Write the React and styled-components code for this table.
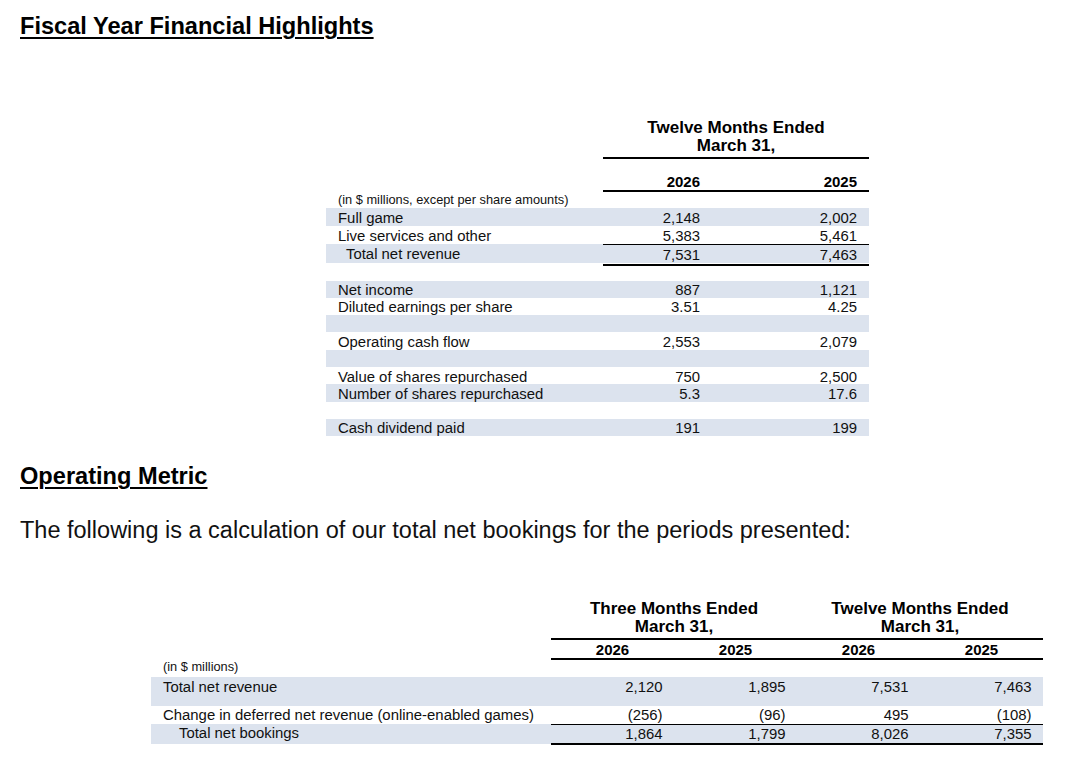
import React from 'react';
import styled, { createGlobalStyle } from 'styled-components';

const GlobalStyle = createGlobalStyle`
    html, body {
        margin: 0;
        padding: 0;
        background: #fff;
    }
    body {
        font-family: 'Liberation Sans', Arial, sans-serif;
        color: #000;
    }
`;

const BAND = '#dce3ee';

const Page = styled.div`
    width: 1080px;
    height: 770px;
    box-sizing: border-box;
    padding: 12px 20px 0;
    overflow: hidden;
`;

const SectionTitle = styled.h2`
    margin: ${p => p.$top || 0}px 0 0;
    font-size: 23.6px;
    line-height: 28px;
    font-weight: 700;
    text-decoration: underline;
    text-decoration-thickness: 2px;
    text-underline-offset: 3px;
`;

const Lead = styled.p`
    margin: 26px 0 0;
    font-size: 23.5px;
    line-height: 28px;
    color: #111;
`;

const Table = styled.div`
    margin-left: ${p => p.$left}px;
    margin-top: ${p => p.$top}px;
    width: ${p => p.$width}px;
    display: flex;
    flex-direction: column;
`;

const Row = styled.div`
    display: grid;
    grid-template-columns: ${p => p.$cols};
    grid-template-rows: 1fr;
    height: ${p => p.$h}px;
    box-sizing: border-box;
    background: ${p => (p.$shade ? BAND : 'transparent')};
    font-size: 14.9px;
    line-height: 18px;
    color: #111;
`;

const Label = styled.div`
    padding-top: ${p => p.$pt}px;
    padding-left: ${p => 12 + (p.$indent || 0)}px;
    white-space: nowrap;
`;

const Units = styled.div`
    padding-left: 12px;
    font-size: 12.8px;
    line-height: ${p => p.$lh}px;
    height: ${p => p.$h}px;
    color: #111;
`;

const Cells = styled.div`
    display: grid;
    grid-template-columns: ${p => p.$cols};
    justify-content: space-between;
    box-sizing: border-box;
    border-top: ${p => (p.$total ? '1px solid #000' : 'none')};
    border-bottom: ${p => (p.$total ? '2px solid #000' : 'none')};
`;

const Value = styled.div`
    padding-top: ${p => p.$pt}px;
    padding-right: ${p => p.$pr}px;
    text-align: right;
`;

const HeadRow = styled.div`
    display: grid;
    grid-template-columns: ${p => p.$cols};
`;

const PeriodBar = styled.div`
    display: grid;
    grid-template-columns: ${p => p.$cols};
    padding-bottom: 2px;
    border-bottom: 2px solid #000;
`;

const Period = styled.div`
    text-align: center;
    font-weight: 700;
    font-size: 17px;
    line-height: 18px;
`;

const YearBar = styled.div`
    display: grid;
    grid-template-columns: ${p => p.$cols};
    justify-content: space-between;
    padding-top: ${p => p.$pt}px;
    border-bottom: 2px solid #000;
`;

const Year = styled.div`
    font-weight: 700;
    font-size: 15px;
    line-height: 17px;
    text-align: ${p => p.$align};
    padding-right: ${p => p.$pr}px;
`;

const highlights = [
    { label: 'Full game', v: ['2,148', '2,002'], h: 18, pt: 1 },
    { label: 'Live services and other', v: ['5,383', '5,461'], h: 18, pt: 1 },
    { label: 'Total net revenue', v: ['7,531', '7,463'], h: 19, pt: 1, total: true, indent: 8 },
    {},
    { label: 'Net income', v: ['887', '1,121'] },
    { label: 'Diluted earnings per share', v: ['3.51', '4.25'] },
    {},
    { label: 'Operating cash flow', v: ['2,553', '2,079'] },
    {},
    { label: 'Value of shares repurchased', v: ['750', '2,500'] },
    { label: 'Number of shares repurchased', v: ['5.3', '17.6'] },
    {},
    { label: 'Cash dividend paid', v: ['191', '199'] },
];

const bookings = [
    { label: 'Total net revenue', v: ['2,120', '1,895', '7,531', '7,463'], h: 29, pt: 1.5, shade: true },
    { label: 'Change in deferred net revenue (online-enabled games)', v: ['(256)', '(96)', '495', '(108)'], h: 18, pt: 0 },
    { label: 'Total net bookings', v: ['1,864', '1,799', '8,026', '7,355'], h: 20, pt: 0, shade: true, total: true, indent: 16 },
];

const TOP_COLS = '277px 266px';
const TOP_VALS = '109px 109px';
const BOT_COLS = '400px 492px';
const BOT_VALS = 'repeat(4, 123px)';

const HighlightsTable = () => (
    <Table $left={306} $top={79} $width={543}>
        <HeadRow $cols={TOP_COLS}>
            <div />
            <PeriodBar $cols="1fr">
                <Period>Twelve Months Ended<br />March 31,</Period>
            </PeriodBar>
        </HeadRow>
        <HeadRow $cols={TOP_COLS}>
            <div />
            <YearBar $cols={TOP_VALS} $pt={14.3}>
                <Year $align="right" $pr={12}>2026</Year>
                <Year $align="right" $pr={12}>2025</Year>
            </YearBar>
        </HeadRow>
        <Units $h={16} $lh={16}>(in $ millions, except per share amounts)</Units>
        {highlights.map((r, i) => {
            const pt = r.pt ?? 0.5;
            return (
                <Row key={i} $cols={TOP_COLS} $h={r.h || 17.3} $shade={i % 2 === 0}>
                    <Label $pt={pt} $indent={r.indent}>{r.label}</Label>
                    <Cells $cols={TOP_VALS} $total={r.total}>
                        {(r.v || ['', '']).map((v, j) => (
                            <Value key={j} $pt={pt} $pr={12}>{v}</Value>
                        ))}
                    </Cells>
                </Row>
            );
        })}
    </Table>
);

const BookingsTable = () => (
    <Table $left={131} $top={56} $width={892}>
        <HeadRow $cols={BOT_COLS}>
            <div />
            <PeriodBar $cols="1fr 1fr">
                <Period>Three Months Ended<br />March 31,</Period>
                <Period>Twelve Months Ended<br />March 31,</Period>
            </PeriodBar>
        </HeadRow>
        <HeadRow $cols={BOT_COLS}>
            <div />
            <YearBar $cols={BOT_VALS} $pt={1}>
                {['2026', '2025', '2026', '2025'].map((y, i) => (
                    <Year key={i} $align="center" $pr={0}>{y}</Year>
                ))}
            </YearBar>
        </HeadRow>
        <Units $h={16.7} $lh={14}>(in $ millions)</Units>
        {bookings.map((r, i) => (
            <Row key={i} $cols={BOT_COLS} $h={r.h} $shade={r.shade}>
                <Label $pt={r.pt} $indent={r.indent}>{r.label}</Label>
                <Cells $cols={BOT_VALS} $total={r.total}>
                    {r.v.map((v, j) => (
                        <Value key={j} $pt={r.pt} $pr={11.5}>{v}</Value>
                    ))}
                </Cells>
            </Row>
        ))}
    </Table>
);

export default function App() {
    return (
        <Page>
            <GlobalStyle />
            <SectionTitle>Fiscal Year Financial Highlights</SectionTitle>
            <HighlightsTable />
            <SectionTitle $top={26}>Operating Metric</SectionTitle>
            <Lead>The following is a calculation of our total net bookings for the periods presented:</Lead>
            <BookingsTable />
        </Page>
    );
}
